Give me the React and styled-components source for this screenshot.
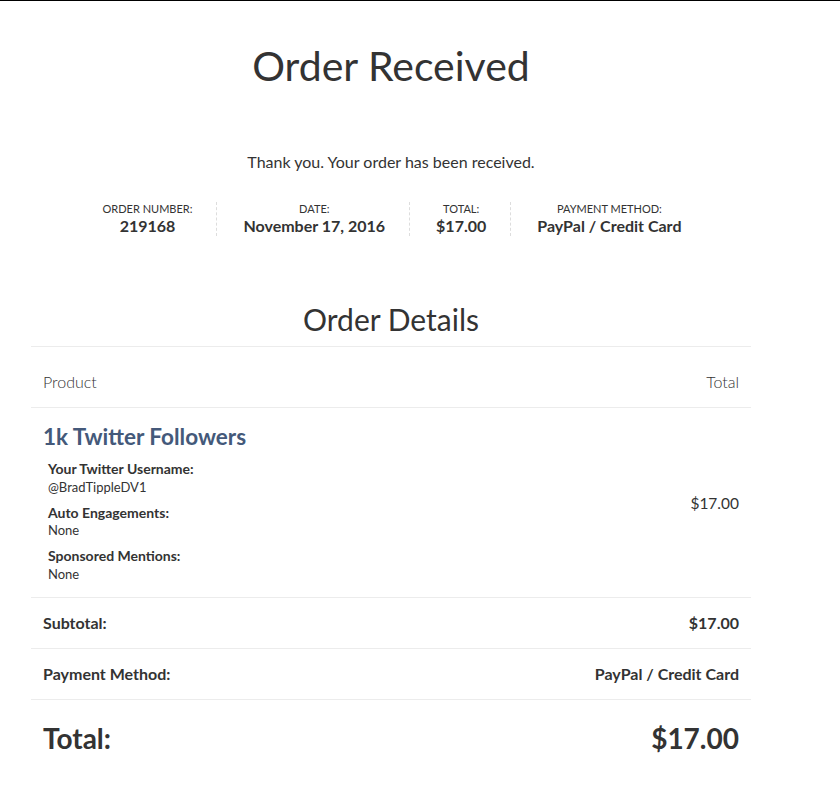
import React from "react";
import styled, { createGlobalStyle } from "styled-components";

const Global = createGlobalStyle`
  html, body { margin: 0; padding: 0; background: #fff; }
  body {
    font-family: Lato, "Open Sans", "Liberation Sans", sans-serif;
    color: #333;
    border-top: 1px solid #000;
  }
`;

const Page = styled.div`
  width: 720px;
  margin-left: 31px;
  padding-top: 37px;
`;

const Title = styled.h1`
  margin: 0;
  text-align: center;
  font-size: 41px;
  font-weight: 400;
  line-height: 56px;
  color: #333;
`;

const Thanks = styled.p`
  margin: 57px 0 0;
  text-align: center;
  font-size: 16px;
  line-height: 22px;
`;

const Meta = styled.ul`
  list-style: none;
  margin: 29px 0 0;
  padding: 0;
  display: flex;
  justify-content: center;
`;

const MetaItem = styled.li`
  padding: 0 24px 0 26px;
  text-align: center;
  border-right: ${(p) => (p.$last ? "none" : "1px dashed #ddd")};
  display: flex;
  flex-direction: column;
`;

const MetaLabel = styled.span`
  font-size: 11px;
  line-height: 14px;
  text-transform: uppercase;
`;

const MetaValue = styled.strong`
  font-size: 16px;
  line-height: 20px;
  font-weight: 700;
`;

const SectionTitle = styled.h2`
  margin: 63px 0 0;
  padding-bottom: 7px;
  text-align: center;
  font-size: 30px;
  line-height: 40px;
  font-weight: 400;
  border-bottom: 1px solid #ececec;
`;

const Row = styled.div`
  display: flex;
  justify-content: space-between;
  align-items: center;
  padding: ${(p) => p.$pad || "14px 12px"};
  border-bottom: ${(p) => (p.$noBorder ? "none" : "1px solid #ececec")};
  font-size: ${(p) => p.$size || "16px"};
  font-weight: ${(p) => p.$weight || 400};
  line-height: ${(p) => p.$lh || "22px"};
`;

const Product = styled.div`
  display: flex;
  flex-direction: column;
`;

const ProductName = styled.a`
  font-size: 22.5px;
  font-weight: 700;
  line-height: 28px;
  color: #44597a;
  text-decoration: none;
`;

const Variations = styled.dl`
  margin: 9px 0 0 5px;
  display: flex;
  flex-direction: column;
`;

const VarLabel = styled.dt`
  font-size: 14px;
  font-weight: 700;
  line-height: 18.5px;
  margin-top: ${(p) => (p.$first ? "0" : "8px")};
`;

const VarValue = styled.dd`
  margin: 0;
  font-size: 13px;
  line-height: 17px;
`;

const Price = styled.span`
  font-size: 15.5px;
`;

export default function App() {
  const meta = [
    ["Order Number:", "219168"],
    ["Date:", "November 17, 2016"],
    ["Total:", "$17.00"],
    ["Payment Method:", "PayPal / Credit Card"],
  ];
  const vars = [
    ["Your Twitter Username:", "@BradTippleDV1"],
    ["Auto Engagements:", "None"],
    ["Sponsored Mentions:", "None"],
  ];
  return (
    <>
      <Global />
      <Page>
        <Title>Order Received</Title>
        <Thanks>Thank you. Your order has been received.</Thanks>
        <Meta>
          {meta.map(([l, v], i) => (
            <MetaItem key={l} $last={i === meta.length - 1}>
              <MetaLabel>{l}</MetaLabel>
              <MetaValue>{v}</MetaValue>
            </MetaItem>
          ))}
        </Meta>
        <SectionTitle>Order Details</SectionTitle>
        <Row $pad="24px 12px 14px" $weight={300}>
          <span>Product</span>
          <span>Total</span>
        </Row>
        <Row $pad="15px 12px 14.5px">
          <Product>
            <ProductName>1k Twitter Followers</ProductName>
            <Variations>
              {vars.map(([l, v], i) => (
                <React.Fragment key={l}>
                  <VarLabel $first={i === 0}>{l}</VarLabel>
                  <VarValue>{v}</VarValue>
                </React.Fragment>
              ))}
            </Variations>
          </Product>
          <Price>$17.00</Price>
        </Row>
        <Row $weight={700}>
          <span>Subtotal:</span>
          <span>$17.00</span>
        </Row>
        <Row $weight={700}>
          <span>Payment Method:</span>
          <span>PayPal / Credit Card</span>
        </Row>
        <Row $weight={700} $size="28px" $lh="36px" $pad="20px 12px" $noBorder>
          <span>Total:</span>
          <span>$17.00</span>
        </Row>
      </Page>
    </>
  );
}
